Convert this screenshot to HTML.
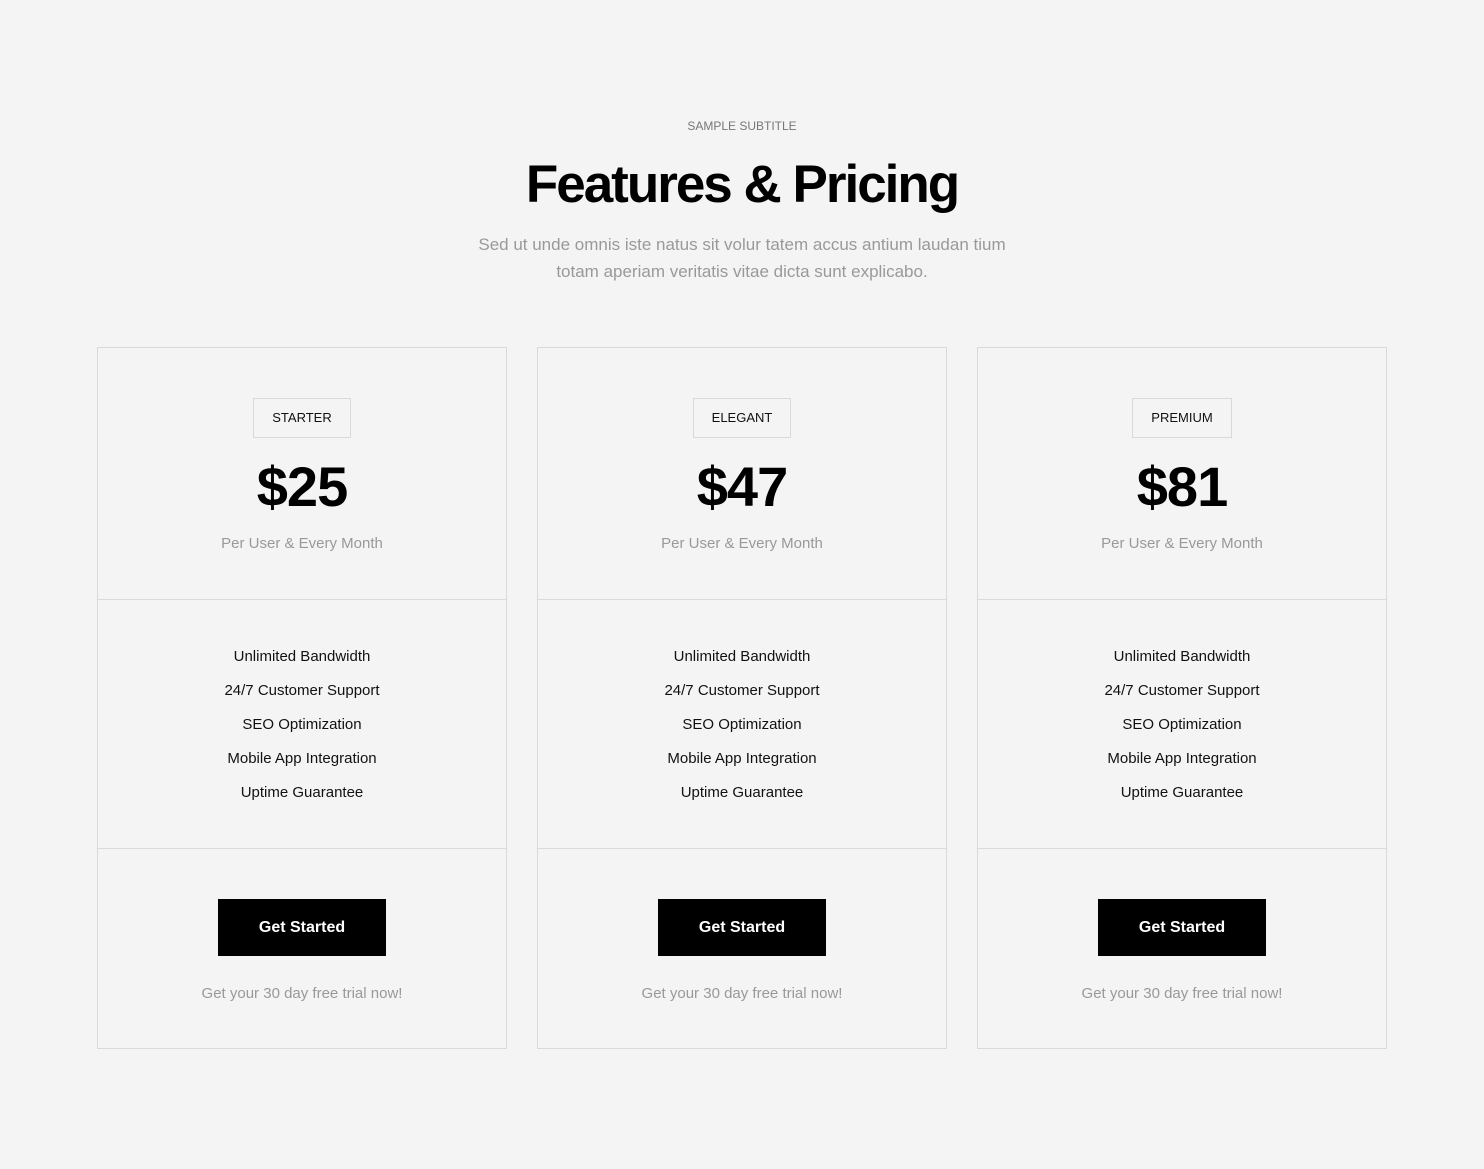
<!DOCTYPE html>
<html><head><style>
*{margin:0;padding:0;box-sizing:border-box}
body{width:1484px;height:1169px;background:#f4f4f4;font-family:"Liberation Sans",sans-serif;position:relative;overflow:hidden}
.c{position:absolute;text-align:center;left:0;width:1484px}
.sub{top:119px;font-size:12px;color:#777}
h1{position:absolute;top:153px;left:0;width:1484px;text-align:center;font-size:53px;font-weight:bold;letter-spacing:-2px;color:#000;line-height:64px}
.p{top:231px;font-size:17px;color:#999;line-height:27px}
.card{position:absolute;top:347px;width:410px;height:702px;border:1px solid #d9d9d9;text-align:center}
.top{height:252px;border-bottom:1px solid #d9d9d9;position:relative}
.lab{position:absolute;left:155px;top:50px;width:98px;height:40px;border:1px solid #d9d9d9;font-size:13px;line-height:38px;color:#111}
.pr{position:absolute;left:0;right:0;top:107px;font-size:56px;font-weight:bold;letter-spacing:-1px;line-height:64px}
.per{position:absolute;left:0;right:0;top:187px;font-size:15px;color:#999}
.mid{height:249px;border-bottom:1px solid #d9d9d9;padding-top:40px}
.mid div{font-size:15px;line-height:34px;color:#111}
.bot{position:relative}
.btn{position:absolute;left:120px;top:50px;width:168px;height:57px;background:#000;color:#fff;font-weight:bold;font-size:16px;line-height:57px}
.tr{position:absolute;left:0;right:0;top:136px;font-size:15px;color:#999}
</style></head><body>
<div class="c sub">SAMPLE SUBTITLE</div>
<h1>Features &amp; Pricing</h1>
<div class="c p">Sed ut unde omnis iste natus sit volur tatem accus antium laudan tium<br>totam aperiam veritatis vitae dicta sunt explicabo.</div>

<div class="card" style="left:97px"><div class="top"><div class="lab">STARTER</div><div class="pr">$25</div><div class="per">Per User &amp; Every Month</div></div>
<div class="mid"><div>Unlimited Bandwidth</div><div>24/7 Customer Support</div><div>SEO Optimization</div><div>Mobile App Integration</div><div>Uptime Guarantee</div></div>
<div class="bot"><div class="btn">Get Started</div><div class="tr">Get your 30 day free trial now!</div></div></div>

<div class="card" style="left:537px"><div class="top"><div class="lab">ELEGANT</div><div class="pr">$47</div><div class="per">Per User &amp; Every Month</div></div>
<div class="mid"><div>Unlimited Bandwidth</div><div>24/7 Customer Support</div><div>SEO Optimization</div><div>Mobile App Integration</div><div>Uptime Guarantee</div></div>
<div class="bot"><div class="btn">Get Started</div><div class="tr">Get your 30 day free trial now!</div></div></div>

<div class="card" style="left:977px"><div class="top"><div class="lab" style="left:154px;width:100px">PREMIUM</div><div class="pr">$81</div><div class="per">Per User &amp; Every Month</div></div>
<div class="mid"><div>Unlimited Bandwidth</div><div>24/7 Customer Support</div><div>SEO Optimization</div><div>Mobile App Integration</div><div>Uptime Guarantee</div></div>
<div class="bot"><div class="btn">Get Started</div><div class="tr">Get your 30 day free trial now!</div></div></div>
</body></html>
